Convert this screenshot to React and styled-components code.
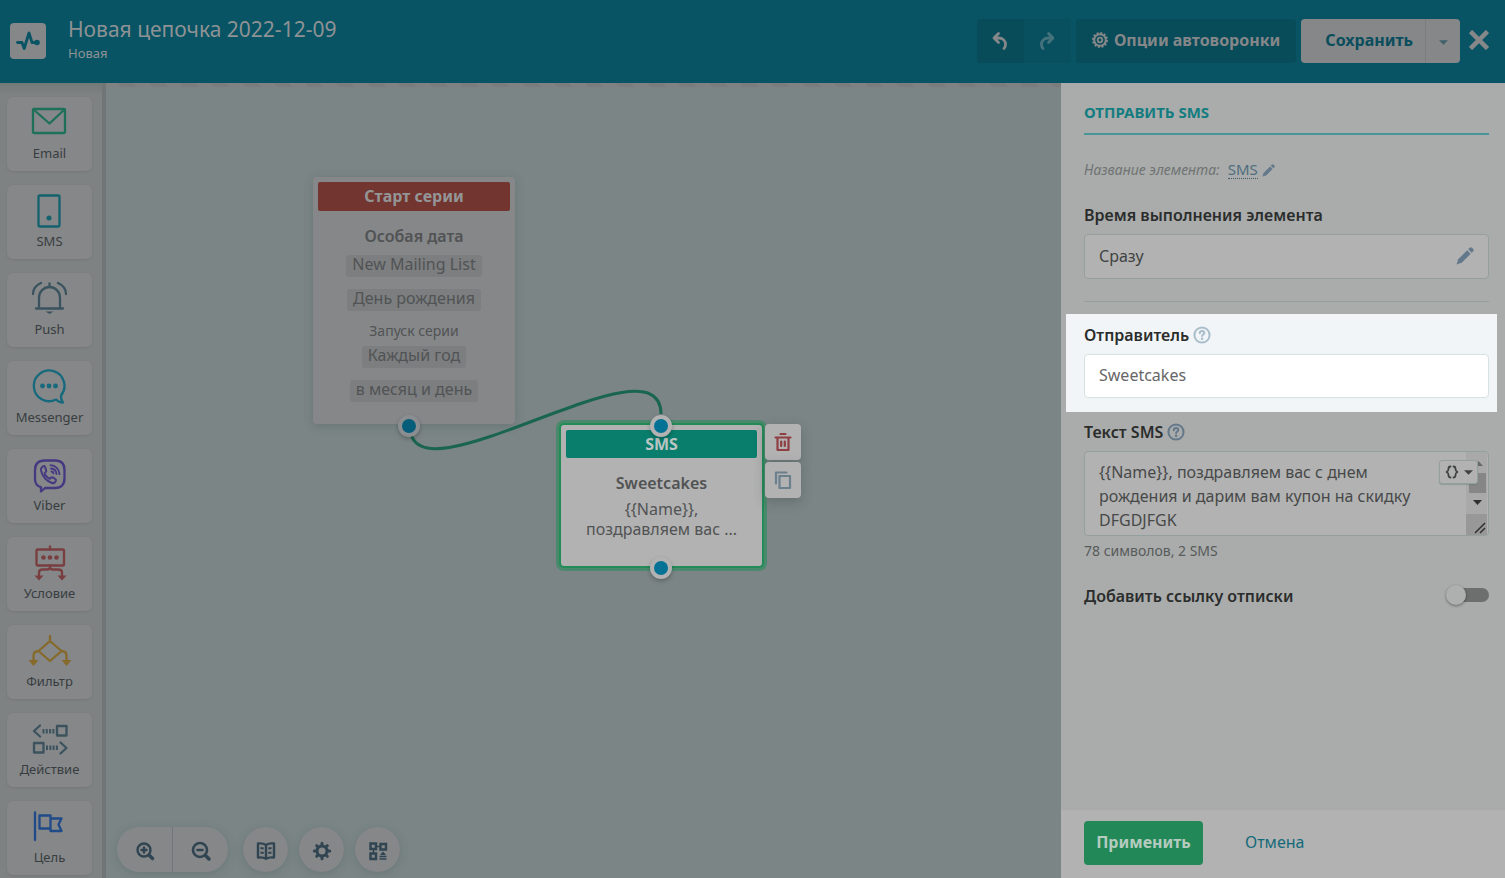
import React from 'react';
import styled, { createGlobalStyle, css } from 'styled-components';

const c = {
  header: '#085464',
  headerDark: '#084b59',
  headerMid: '#085060',
  light: '#858789',
  canvas: '#7b8585',
  panel: '#a9acab',
  paper: '#b2b2b2',
  line: '#93a09d',
  ink: '#2b2c2c',
  text: '#474949',
  steel: '#63788a',
  dark: '#304551',
};

const Global = createGlobalStyle`
  *, *::before, *::after { box-sizing: border-box; }
  body { margin: 0; font-family: 'Noto Sans', 'Open Sans', sans-serif; font-size: 16px; color: ${c.text}; }
  button, input, textarea { font: inherit; color: inherit; }
  button { border: 0; padding: 0; background: none; cursor: pointer; }
  svg { display: block; flex: none; }
`;

const App = styled.div`
  display: grid;
  grid-template-rows: auto minmax(0, 1fr);
  height: 100vh;
`;

/* ---------- header ---------- */

const Header = styled.header`
  display: flex;
  align-items: center;
  height: 83px;
  padding: 0 16px 2px 10px;
  background: ${c.header};
  color: #8e9294;
`;

const Logo = styled.a`
  display: grid;
  place-items: center;
  width: 36px;
  height: 36px;
  margin-right: 22px;
  border-radius: 4px;
  background: ${c.light};
`;

const Titles = styled.div`
  flex: 1;
  min-width: 0;
`;

const Title = styled.h1`
  margin: 0;
  font-size: 21px;
  font-weight: 400;
  line-height: 26px;
`;

const Subtitle = styled.p`
  margin: 0;
  padding-bottom: 2px;
  font-size: 13px;
  line-height: 22px;
`;

const HeaderActions = styled.div`
  display: flex;
  align-items: center;
  gap: 5px;
`;

const ButtonGroup = styled.div`
  display: flex;
  height: 44px;
  border-radius: 4px;
  overflow: hidden;
`;

const HistoryButton = styled.button`
  display: grid;
  place-items: center;
  width: 47px;
  background: ${(p) => (p.disabled ? c.headerMid : c.headerDark)};
  color: ${(p) => (p.disabled ? '#46727c' : c.light)};
`;

const OptionsButton = styled.button`
  display: flex;
  align-items: center;
  gap: 6px;
  height: 44px;
  padding: 0 16px 2px;
  border-radius: 4px;
  background: ${c.headerDark};
  color: ${c.light};
  font-weight: 700;
`;

const SaveButton = styled.button`
  padding: 0 12px 2px 24px;
  background: ${c.light};
  color: #0a4d5c;
  font-weight: 700;
`;

const SaveMenuButton = styled.button`
  display: grid;
  place-items: center;
  width: 35px;
  padding-top: 4px;
  border-left: 1px solid #7a7c7e;
  background: ${c.light};
  color: #40606a;
`;

const CloseButton = styled.button`
  margin-left: 4px;
  padding-bottom: 2px;
  color: ${c.light};
`;

/* ---------- body ---------- */

const Workspace = styled.div`
  display: grid;
  grid-template-columns: 106px minmax(0, 1fr) 444px;
  min-height: 0;
`;

const Palette = styled.nav`
  display: flex;
  flex-direction: column;
  gap: 14px;
  padding: 14px 10px 0 7px;
  border-right: 4px solid #707675;
  background: linear-gradient(#737879, #7e8283 12px);
  overflow: hidden;
`;

const PaletteItem = styled.button`
  display: flex;
  flex-direction: column;
  flex: none;
  align-items: center;
  gap: 3px;
  height: 74px;
  padding-top: 8px;
  border-radius: 6px;
  background: ${c.light};
  box-shadow: 0 1px 2px rgba(60, 70, 70, 0.15);
  color: #383d40;
  font-size: 13px;
  line-height: 18px;
`;

const Canvas = styled.main`
  position: relative;
  background: ${c.canvas};
  overflow: hidden;
`;

const Stripe = styled.div`
  height: 4px;
  background: repeating-linear-gradient(45deg, #7f8183 0 11px, #7a7c7e 11px 22px);
`;

const Wires = styled.svg`
  position: absolute;
  inset: 0;
  width: 100%;
  height: 100%;
`;

const Node = styled.article`
  position: absolute;
  display: flex;
  flex-direction: column;
  align-items: center;
  padding: 5px;
  color: #515354;
  text-align: center;
  ${(p) =>
    p.$kind === 'start'
      ? css`
          left: 207px;
          top: 94px;
          width: 202px;
          padding-bottom: 22px;
          border-radius: 4px;
          background: ${c.light};
          box-shadow: 0 2px 10px rgba(50, 70, 70, 0.25);
        `
      : css`
          left: 453px;
          top: 340px;
          width: 205px;
          padding-bottom: 27px;
          border: 2px solid #228b57;
          border-radius: 5px;
          background: ${c.paper};
          box-shadow: 0 0 0 3px #4a8a6c;
        `}
`;

const NodeBar = styled.h2`
  align-self: stretch;
  margin: 0 0 14px;
  border-radius: 2px;
  background: ${(p) => (p.$kind === 'start' ? '#73352f' : '#0a7e6d')};
  color: ${(p) => (p.$kind === 'start' ? '#939597' : '#bcc6c4')};
  font-size: 16px;
  font-weight: 700;
  line-height: ${(p) => (p.$kind === 'start' ? '29px' : '28px')};
`;

const NodeTitle = styled.h3`
  margin: 0;
  font-size: 16px;
  font-weight: 600;
  line-height: 22px;
`;

const NodeText = styled.p`
  width: 160px;
  margin: 5px 0 0;
  line-height: 20px;
`;

const NodeNote = styled.p`
  margin: 10px 0 5px;
  font-size: 14px;
  line-height: 20px;
`;

const Tags = styled.div`
  display: flex;
  flex-direction: column;
  align-items: center;
  gap: 12px;
`;

const FirstTags = styled(Tags)`
  margin-top: 8px;
`;

const Tag = styled.span`
  padding: 0 6px 3px;
  border-radius: 3px;
  background: #7c7e80;
  line-height: 19px;
`;

const Port = styled.span`
  position: absolute;
  left: ${(p) => p.$x}px;
  top: ${(p) => p.$y}px;
  width: 22px;
  height: 22px;
  border: 4px solid ${(p) => (p.$dim ? '#8b8e90' : '#b2b2b2')};
  border-radius: 50%;
  background: ${(p) => (p.$dim ? '#065d79' : '#037295')};
  box-shadow: 0 2px 4px rgba(0, 0, 0, 0.25);
`;

const NodeTools = styled.div`
  position: absolute;
  left: 659px;
  top: 341px;
  display: flex;
  flex-direction: column;
  gap: 2px;
`;

const NodeTool = styled.button`
  display: grid;
  place-items: center;
  width: 36px;
  height: 36px;
  border-radius: 4px;
  background: ${c.paper};
  box-shadow: 0 4px 12px rgba(50, 60, 60, 0.3);
`;

const BottomTools = styled.div`
  position: absolute;
  left: 11px;
  bottom: 6px;
  display: flex;
  gap: 11px;
`;

const ZoomPill = styled.div`
  display: flex;
  margin-right: 4px;
  border-radius: 23px;
  overflow: hidden;
  box-shadow: 0 2px 8px rgba(60, 80, 80, 0.25);
`;

const ToolButton = styled.button`
  display: grid;
  place-items: center;
  width: 45px;
  height: 45px;
  padding-top: 2px;
  border-radius: 50%;
  background: ${c.light};
  color: ${c.dark};
  box-shadow: 0 2px 8px rgba(60, 80, 80, 0.25);
`;

const ZoomButton = styled(ToolButton)`
  width: 55px;
  border-radius: 0;
  box-shadow: none;
  & + & {
    width: 56px;
    border-left: 1px solid #727678;
  }
`;

/* ---------- settings panel ---------- */

const Panel = styled.aside`
  display: flex;
  flex-direction: column;
  min-height: 0;
  background: ${c.panel};
`;

const PanelBody = styled.div`
  flex: 1;
  min-height: 0;
  padding: 18px 16px 0 23px;
  overflow: hidden;
`;

const PanelTitle = styled.h2`
  margin: 0;
  padding-bottom: 10px;
  border-bottom: 2px solid #4a9597;
  color: #137c80;
  font-size: 15px;
  font-weight: 700;
  line-height: 22px;
  text-transform: uppercase;
`;

const NameRow = styled.div`
  display: flex;
  align-items: center;
  gap: 8px;
  margin: 25px 0 23px;
  font-size: 14px;
  line-height: 20px;
`;

const NameLabel = styled.span`
  color: #707373;
  font-style: italic;
`;

const NameButton = styled.button`
  display: flex;
  align-items: center;
  gap: 4px;
  color: #506c80;
`;

const NameValue = styled.span`
  border-bottom: 1px dotted #405a68;
  font-size: 15px;
  line-height: 17px;
`;

const Label = styled.label`
  display: flex;
  align-items: center;
  gap: 4px;
  margin-bottom: 7px;
  color: ${c.ink};
  font-weight: 600;
  line-height: 24px;
`;

const fieldBox = css`
  display: block;
  width: 100%;
  padding: 0 14px;
  border: 1px solid ${c.line};
  border-radius: 4px;
  background: ${c.paper};
`;

const TimeButton = styled.button`
  ${fieldBox}
  display: flex;
  align-items: center;
  justify-content: space-between;
  height: 45px;
  padding-bottom: 2px;
  color: #414343;
`;

const Divider = styled.hr`
  height: 1px;
  margin: 22px 0 12px;
  border: 0;
  background: ${c.line};
`;

const Highlight = styled.section`
  margin: 0 -8px 8px -18px;
  padding: 9px 8px 14px 18px;
  background: #f1f5f7;
`;

const SenderInput = styled.input`
  ${fieldBox}
  height: 44px;
  padding-bottom: 3px;
  border-color: #d5e2df;
  background: #fff;
  color: #666;
  outline: none;
`;

const Message = styled.div`
  position: relative;
`;

const MessageText = styled.textarea`
  ${fieldBox}
  height: 85px;
  padding: 8px 60px 0 14px;
  line-height: 24px;
  resize: none;
  overflow: hidden;
  outline: none;
`;

const ScrollBar = styled.svg`
  position: absolute;
  top: 1px;
  right: 2px;
`;

const VariableButton = styled.button`
  position: absolute;
  top: 9px;
  right: 11px;
  display: flex;
  align-items: center;
  justify-content: center;
  gap: 5px;
  width: 39px;
  height: 24px;
  border: 1px solid ${c.line};
  border-radius: 3px;
  background: ${c.paper};
  box-shadow: 0 1px 1px rgba(90, 120, 115, 0.4);
  color: #414343;
`;

const Hint = styled.p`
  margin: 5px 0 19px;
  color: #585b5b;
  font-size: 14px;
  line-height: 20px;
`;

const SwitchRow = styled.label`
  display: flex;
  align-items: center;
  justify-content: space-between;
  color: ${c.ink};
  font-weight: 600;
  line-height: 32px;
`;

const Switch = styled.input`
  appearance: none;
  display: flex;
  align-items: center;
  width: 39px;
  height: 14px;
  margin: 0 0 2px;
  border-radius: 7px;
  background: #6d6e6e;
  &::before {
    content: '';
    width: 20px;
    height: 20px;
    margin-left: -4px;
    border-radius: 50%;
    background: #aeb0b0;
    box-shadow: 0 1px 3px rgba(0, 0, 0, 0.4);
  }
`;

const PanelFooter = styled.footer`
  display: flex;
  align-items: center;
  gap: 42px;
  padding: 11px 23px 13px;
  background: ${c.paper};
`;

const ApplyButton = styled.button`
  width: 119px;
  height: 44px;
  padding-bottom: 2px;
  border-radius: 4px;
  background: #238857;
  color: #b5cbbf;
  font-weight: 700;
`;

const CancelButton = styled.button`
  padding-bottom: 2px;
  color: #146a7a;
  font-size: 16px;
`;

/* ---------- icons ---------- */

const Stroke = ({ w, h, color = 'currentColor', width = 2, children, ...rest }) => (
  <svg width={w} height={h} viewBox={`0 0 ${w} ${h}`} fill="none" stroke={color} strokeWidth={width} strokeLinecap="round" strokeLinejoin="round" aria-hidden="true" {...rest}>
    {children}
  </svg>
);

const Fill = ({ children, color = 'currentColor' }) => <g fill={color} stroke="none">{children}</g>;

const Caret = ({ w = 8, h = 4 }) => (
  <svg width={w} height={h} viewBox="0 0 8 4" aria-hidden="true"><path d="M0 0h8L4 4z" fill="currentColor" /></svg>
);

const Pencil = ({ size, color = c.steel }) => (
  <svg width={size} height={size} viewBox="0 0 18 18" fill={color} aria-hidden="true">
    <path d="M11.2 3.3l3.5 3.5-9 9L.6 17.400l1.600-5.100z" />
    <path d="M12.200 2.300l1.300-1.300a1.900 1.900 0 0 1 2.700 0l.8.8a1.900 1.900 0 0 1 0 2.700l-1.300 1.300z" />
  </svg>
);

const Help = ({ color = c.steel }) => (
  <Stroke w={18} h={18} color={color}>
    <circle cx="9" cy="9" r="7.600" />
    <path d="M6.800 7.200c0-1.400 1-2.200 2.300-2.200s2.200.8 2.200 2c0 1.400-2.200 1.600-2.200 3" />
    <Fill color={color}><circle cx="9.100" cy="12.800" r="1.300" /></Fill>
  </Stroke>
);

const paletteItems = [
  ['Email', '#1f7059', <><rect x="6" y="4" width="32" height="24" rx="1" /><path d="M6.500 4.500L22.500 18.500 37.500 4.500" /></>],
  ['SMS', '#15626f', <><rect x="11.500" y="2.500" width="21" height="31" rx="1" /><Fill color="#15626f"><circle cx="22" cy="25" r="2.500" /></Fill></>],
  ['Push', '#3a535f', <><path d="M12 27V16.500a10.500 10.500 0 0 1 21 0V27M9 27.500h27M22.500 5.500V2.500M6 13C6 8 9.500 4 14 2M39 13C39 8 35.500 4 31 2" /><Fill color="#3a535f"><path d="M18.500 30.500h8l-4 2.500z" /></Fill></>],
  ['Messenger', '#176a7d', <><path d="M29 30.500A15.300 15.300 0 1 1 34 26.500C34 30 35 32.500 36 33.500C33.500 33.500 31 32.500 29 30.500z" /><Fill color="#176a7d"><circle cx="15.500" cy="17" r="2.400" /><circle cx="22" cy="17" r="2.400" /><circle cx="28.500" cy="17" r="2.400" /></Fill></>],
  ['Viber', '#463982', <><path d="M18 31L14 34.500V30.200C9.500 29 8 26 8 22V13C8 6 12 3.500 18 3.500H28C34 3.500 37.500 6 37.500 13V21C37.500 28 34 31 28 31z" /><path strokeWidth="2" d="M17.500 9c-2 .3-4 2-3.500 4.500 1.500 6 5.500 10.500 11 12.500 2 .5 3.500-1 4-2.800.2-.8-3.500-3.300-4.300-3-.9.3-1.300 1.800-2.200 1.500-2-.8-4-3-4.800-5.200-.3-.9 1.200-1.400 1.500-2.200.2-.8-1.200-4.500-1.700-5.300z" /><path strokeWidth="1.800" d="M23.500 8.200c5 .3 8.700 4 9 9M24 11.500c3 .3 5.200 2.500 5.500 5.500M24.500 14.500c1 .2 1.700.9 2 2" /></>],
  ['Условие', '#793f40', <><rect x="9.500" y="4.500" width="27.500" height="16" rx="1" /><path d="M23 1.500V4.500M23 20.500V23.500M12 31V27.500C12 25 13.500 24.500 15.500 24.500H20C22 24.500 23 23.500 23 22C23 23.500 24 24.500 26 24.500H31C33.500 24.500 35 25 35 27.500V31" /><Fill color="#793f40"><circle cx="16.500" cy="12.500" r="2.300" /><circle cx="23" cy="12.500" r="2.300" /><circle cx="29.500" cy="12.500" r="2.300" /><path d="M7.500 30.500h9L12 35.500zM30.500 30.500h9L35 35.500z" /></Fill></>],
  ['Фильтр', '#856a2b', <><path d="M23 3V8L34.500 18 23 28 11.500 18 23 8M11.500 18C8 18 6.500 20 6.500 23V28M34.500 18C38 18 39.500 20 39.500 23V28" /><Fill color="#856a2b"><path d="M1.500 27h10L6.500 33zM34.500 27h10L39.500 33z" /></Fill></>],
  ['Действие', '#3c535e', <><path d="M13 4.500L7 10l6 5.500M33.500 21.500l6 5.500-6 5.500" /><rect x="30" y="5" width="9.500" height="9.500" /><rect x="7" y="22" width="9.500" height="9.500" /><path strokeLinecap="butt" strokeWidth="2" d="M16.500 8v4.500M19.800 8v4.500M23.100 8v4.500M26.400 8v4.500M20 24.500v4.500M23.300 24.500v4.500M26.600 24.500v4.500M29.900 24.500v4.500" /></>],
  ['Цель', '#204b88', <><path d="M8 3.500V31M12.500 6.500h11v13h-11zM23.500 9.500h11l-3 6 3 6.500h-11z" /></>],
];

const Gear = () => (
  <Stroke w={20} h={20} width={3}>
    <circle cx="10" cy="10" r="5" />
    <path d="M10 2.300v2M10 15.700v2M2.300 10h2M15.700 10h2M4.700 4.700l1 1M14.300 14.300l1 1M4.700 15.300l1-1M14.300 5.700l1-1" />
  </Stroke>
);

const OptionsGear = () => (
  <Stroke w={16} h={16}>
    <circle cx="8" cy="8" r="5.800" />
    <circle cx="8" cy="8" r="2.300" strokeWidth="1.800" />
    <circle cx="8" cy="8" r="7" strokeWidth="2" strokeDasharray="2.100 1.565" strokeLinecap="butt" />
  </Stroke>
);

export default function Automation() {
  return (
    <App>
      <Global />
      <Header>
        <Logo href="#" aria-label="SendPulse">
          <Stroke w={26} h={26} color={c.header} width={2.8}>
            <path d="M2.500 14.500H7L9.200 20.500 14 5 17 14.500H22" />
            <Fill color={c.header}><circle cx="22" cy="14.500" r="2.800" /></Fill>
          </Stroke>
        </Logo>
        <Titles>
          <Title>Новая цепочка 2022-12-09</Title>
          <Subtitle>Новая</Subtitle>
        </Titles>
        <HeaderActions>
          <ButtonGroup>
            <HistoryButton aria-label="Отменить">
              <Stroke w={18} h={20} width={2.8}><path d="M7.500 2.500L3 7l4.500 4.500M3.500 7H7.500C12 7 14.500 10 14.500 13.500C14.500 15.500 14 16.500 13 17.500" /></Stroke>
            </HistoryButton>
            <HistoryButton aria-label="Повторить" disabled>
              <Stroke w={18} h={20} width={2.8}><path d="M10.500 2.500L15 7l-4.500 4.500M14.500 7H10.500C6 7 3.500 10 3.500 13.500C3.500 15.500 4 16.500 5 17.500" /></Stroke>
            </HistoryButton>
          </ButtonGroup>
          <OptionsButton><OptionsGear />Опции автоворонки</OptionsButton>
          <ButtonGroup>
            <SaveButton>Сохранить</SaveButton>
            <SaveMenuButton aria-label="Другие варианты сохранения"><Caret w={9} h={5} /></SaveMenuButton>
          </ButtonGroup>
          <CloseButton aria-label="Закрыть">
            <Stroke w={20} h={20} width={4.6} strokeLinecap="butt"><path d="M1.500 1.500l17 17M18.500 1.500l-17 17" /></Stroke>
          </CloseButton>
        </HeaderActions>
      </Header>

      <Workspace>
        <Palette aria-label="Элементы">
          {paletteItems.map(([name, color, icon]) => (
            <PaletteItem key={name}>
              <Stroke w={45} h={36} width={2.3} color={color}>{icon}</Stroke>
              {name}
            </PaletteItem>
          ))}
        </Palette>

        <Canvas>
          <Stripe />
          <Node $kind="start">
            <NodeBar $kind="start">Старт серии</NodeBar>
            <NodeTitle>Особая дата</NodeTitle>
            <FirstTags>
              <Tag>New Mailing List</Tag>
              <Tag>День рождения</Tag>
            </FirstTags>
            <NodeNote>Запуск серии</NodeNote>
            <Tags>
              <Tag>Каждый год</Tag>
              <Tag>в месяц и день</Tag>
            </Tags>
          </Node>
          <Wires fill="none" stroke="#19654f" strokeWidth="3" aria-hidden="true">
            <path d="M304 343C304 426 555 248 555 331" />
          </Wires>
          <Node $kind="sms">
            <NodeBar $kind="sms">SMS</NodeBar>
            <NodeTitle>Sweetcakes</NodeTitle>
            <NodeText>{'{{Name}}, поздравляем вас ...'}</NodeText>
          </Node>
          <Port $x={292} $y={332} $dim />
          <Port $x={544} $y={332} />
          <Port $x={544} $y={474} />
          <NodeTools>
            <NodeTool aria-label="Удалить">
              <Stroke w={18} h={20} width={2.2} color="#8f3f43"><path d="M1.500 5.500h15M6.500 2h5M3.500 5.500V18h11V5.500M7.200 9.500v4.500M10.800 9.500v4.500" /></Stroke>
            </NodeTool>
            <NodeTool aria-label="Копировать">
              <Stroke w={18} h={20} width={2.2} color="#6b7f8d"><path d="M2 13.500V2.500h10.500M5.500 6h10.500v12h-10.500z" /></Stroke>
            </NodeTool>
          </NodeTools>
          <BottomTools>
            <ZoomPill>
              <ZoomButton aria-label="Увеличить">
                <Stroke w={20} h={20} width={2.4}><circle cx="9" cy="9" r="6.500" /><path d="M9 6.500v5M6.500 9h5" /><path strokeWidth="3.400" d="M14.500 14.500l3 3" /></Stroke>
              </ZoomButton>
              <ZoomButton aria-label="Уменьшить">
                <Stroke w={20} h={20} width={2.6}><circle cx="9" cy="9" r="7" /><path d="M6.500 9h5" /><path strokeWidth="3.400" d="M15 15l3 3" /></Stroke>
              </ZoomButton>
            </ZoomPill>
            <ToolButton aria-label="Справка">
              <Stroke w={20} h={20} width={2.4}><path d="M10 4C8 2.500 5 2.200 2 2.500v14c3-.3 6 0 8 1.300 2-1.300 5-1.600 8-1.300v-14c-3-.3-6 0-8 1.500zM10 4V17.500" /><path strokeWidth="2" strokeLinecap="butt" d="M4.500 7l3.200.5M4.500 11.500l3.200.5M15.500 7l-3.200.5M15.500 11.500l-3.200.5" /></Stroke>
            </ToolButton>
            <ToolButton aria-label="Настройки"><Gear /></ToolButton>
            <ToolButton aria-label="Упорядочить">
              <Stroke w={20} h={20} width={2.4} strokeLinejoin="miter" strokeLinecap="butt">
                <path d="M2.500 2.500h5.500v5.500h-5.500zM12.500 3h5.500v5.500h-5.500zM2.500 12.500h5.500v5.500h-5.500z" />
                <path strokeWidth="1.500" d="M8 5.500h4.500M5.500 8v4.500M11.500 15.500h7M11.500 18h7" />
                <Fill><path d="M15 10.500l3 3.500h-6z" /></Fill>
              </Stroke>
            </ToolButton>
          </BottomTools>
        </Canvas>

        <Panel>
          <PanelBody>
            <PanelTitle>Отправить SMS</PanelTitle>
            <NameRow>
              <NameLabel>Название элемента:</NameLabel>
              <NameButton aria-label="Изменить название: SMS">
                <NameValue>SMS</NameValue>
                <Pencil size={13} />
              </NameButton>
            </NameRow>
            <Label htmlFor="run-time">Время выполнения элемента</Label>
            <TimeButton id="run-time">Сразу<Pencil size={18} /></TimeButton>
            <Divider />
            <Highlight>
              <Label htmlFor="sender">Отправитель<Help color="#a9bdcb" /></Label>
              <SenderInput id="sender" defaultValue="Sweetcakes" />
            </Highlight>
            <Label htmlFor="sms-text">Текст SMS<Help /></Label>
            <Message>
              <MessageText id="sms-text" defaultValue="{{Name}}, поздравляем вас с днем рождения и дарим вам купон на скидку DFGDJFGK" />
              <ScrollBar width="21" height="83" viewBox="0 0 21 83" aria-hidden="true">
                <path d="M0 0h21v83H0z" fill="#a9a9a9" />
                <path d="M3 21h17v20H3z" fill="#868686" />
                <path d="M8 14h9l-4.500-5z" fill="#686868" />
                <path d="M7 48h9l-4.500 5z" fill="#303030" />
                <path d="M0 62h21v21H0z" fill="#989898" />
                <path d="M9 81l10-10M14 81l5-5" stroke="#303030" strokeWidth="1.500" />
              </ScrollBar>
              <VariableButton aria-label="Вставить переменную">
                <Stroke w={14} h={14} width={1.8}><path d="M5.500 1.500C3.500 1.500 3.500 2.500 3.500 4S3.300 6.300 1.500 7C3.300 7.700 3.500 8.500 3.500 10S3.500 12.500 5.500 12.500M8.500 1.500C10.500 1.500 10.500 2.500 10.500 4S10.700 6.300 12.500 7C10.700 7.700 10.500 8.500 10.500 10S10.500 12.500 8.500 12.500" /></Stroke>
                <Caret w={9} h={5} />
              </VariableButton>
            </Message>
            <Hint>78 символов, 2 SMS</Hint>
            <SwitchRow>
              Добавить ссылку отписки
              <Switch type="checkbox" />
            </SwitchRow>
          </PanelBody>
          <PanelFooter>
            <ApplyButton>Применить</ApplyButton>
            <CancelButton>Отмена</CancelButton>
          </PanelFooter>
        </Panel>
      </Workspace>
    </App>
  );
}
